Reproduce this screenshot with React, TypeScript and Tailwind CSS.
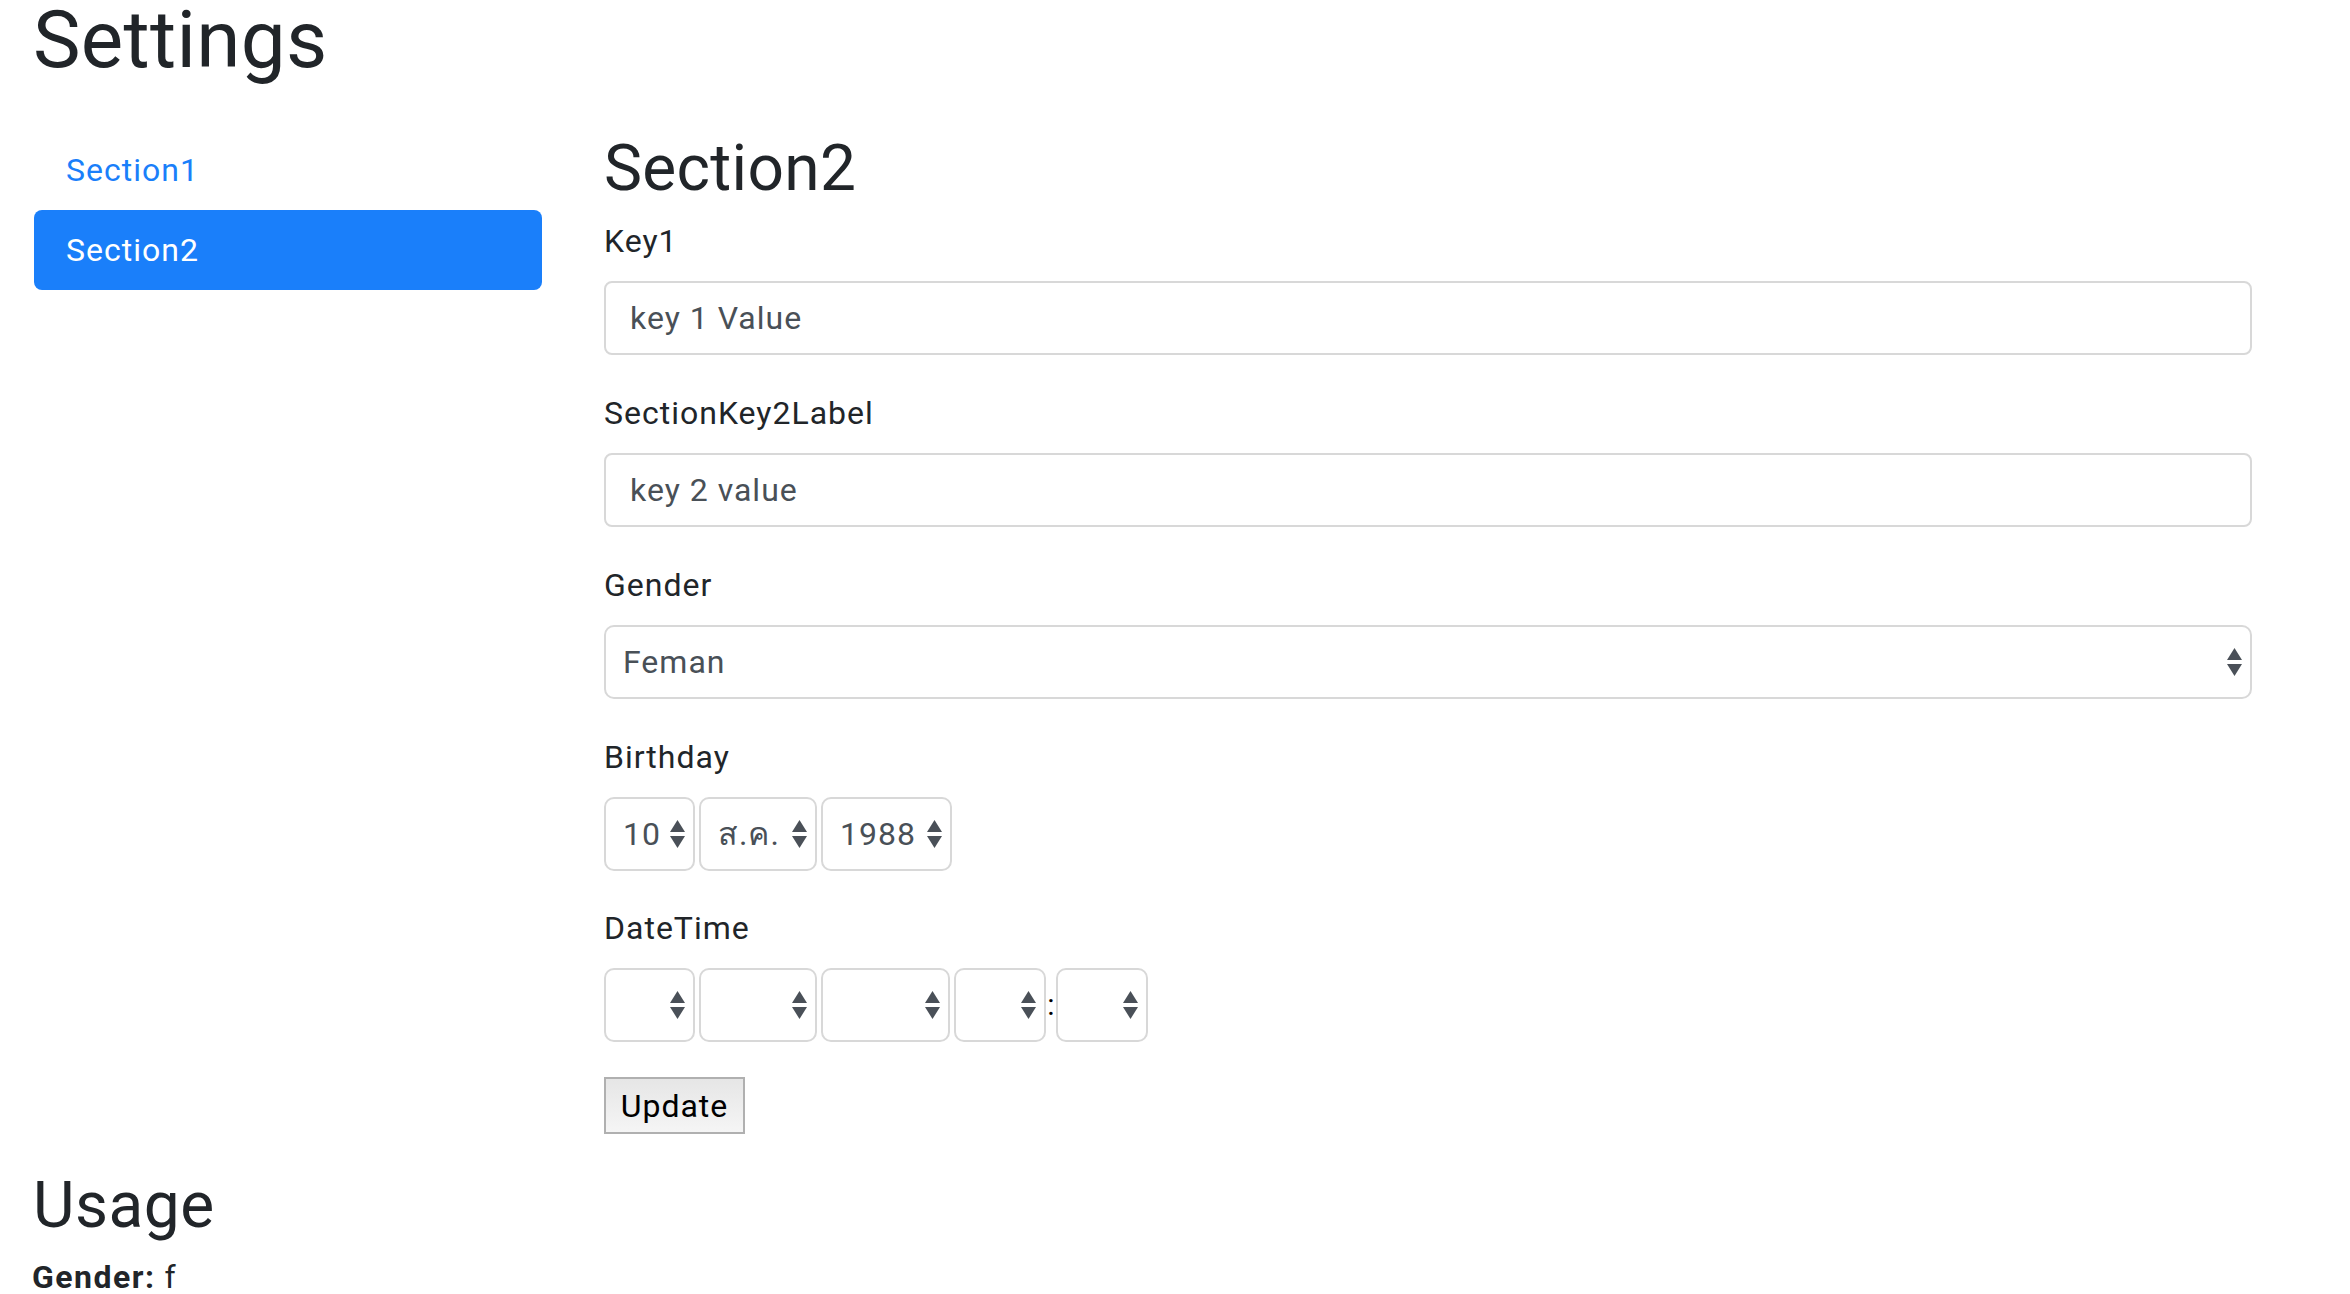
import React from 'react';

function Arrows() {
  return (
    <svg width="15" height="28" viewBox="0 0 15 28" className="shrink-0">
      <path d="M7.5 0 L15 12 L0 12 Z" fill="#4a5058" />
      <path d="M0 16 L15 16 L7.5 28 Z" fill="#4a5058" />
    </svg>
  );
}

function SmallSelect({ value, width }: { value?: string; width: string }) {
  return (
    <div className={`${width} h-[74px] shrink-0 flex items-center justify-between pl-[17px] pr-[8px] border-2 border-[#d8d8d8] rounded-[10px] bg-white text-[#495057]`}>
      <span>{value}</span>
      <Arrows />
    </div>
  );
}

export default function App() {
  return (
    <div className="min-h-screen bg-white px-[30px] overflow-hidden font-['Roboto',sans-serif] text-[#212529] text-[32px] leading-[48px] tracking-[1px]">
      <h1 className="pl-[3px] text-[80px] leading-[80px] font-normal tracking-[0.3px]">Settings</h1>

      <div className="mt-[50px] flex">
        {/* ═══ NAV ═══ */}
        <div className="w-[574px] shrink-0 pl-[4px]">
          <nav className="w-[508px] flex flex-col">
            <a className="px-[32px] py-[16px] text-[#1a7ffa]">Section1</a>
            <a className="px-[32px] py-[16px] rounded-[8px] bg-[#1a7ffa] text-white">Section2</a>
          </nav>
        </div>

        {/* ═══ FORM ═══ */}
        <div className="w-[1648px]">
          <h2 className="text-[64px] leading-[77px] mb-[10px] tracking-[0.3px]">Section2</h2>

          <label className="block mb-[16px]">Key1</label>
          <div className="h-[74px] mb-[34px] flex items-center px-[24px] border-2 border-[#d8d8d8] rounded-[8px] text-[#495057]">
            key 1 Value
          </div>

          <label className="block mb-[16px]">SectionKey2Label</label>
          <div className="h-[74px] mb-[34px] flex items-center px-[24px] border-2 border-[#d8d8d8] rounded-[8px] text-[#495057]">
            key 2 value
          </div>

          <label className="block mb-[16px]">Gender</label>
          <div className="h-[74px] mb-[34px] flex items-center justify-between pl-[17px] pr-[8px] border-2 border-[#d8d8d8] rounded-[10px] text-[#495057]">
            <span>Feman</span>
            <Arrows />
          </div>

          <label className="block mb-[16px]">Birthday</label>
          <div className="flex gap-[4px] mb-[33px]">
            <SmallSelect value="10" width="w-[91px]" />
            <SmallSelect value="ส.ค." width="w-[118px]" />
            <SmallSelect value="1988" width="w-[131px]" />
          </div>

          <label className="block mb-[16px]">DateTime</label>
          <div className="flex items-center mb-[35px]">
            <SmallSelect width="w-[91px]" />
            <div className="w-[4px]" />
            <SmallSelect width="w-[118px]" />
            <div className="w-[4px]" />
            <SmallSelect width="w-[129px]" />
            <div className="w-[4px]" />
            <SmallSelect width="w-[92px]" />
            <span className="w-[10px] text-center text-black text-[30px] leading-none tracking-normal">:</span>
            <SmallSelect width="w-[92px]" />
          </div>

          <button className="w-[141px] h-[57px] border-2 border-[#b0b0b0] bg-gradient-to-b from-[#e6e6e6] to-[#f5f5f5] text-black text-[32px] leading-none">
            Update
          </button>
        </div>
      </div>

      {/* ═══ USAGE ═══ */}
      <h2 className="mt-[33px] pl-[3px] text-[64px] leading-[77px] tracking-[0.5px]">Usage</h2>
      <p className="mt-[9px] pl-[2px]">
        <b className="font-bold tracking-[1.5px]">Gender:</b> f
      </p>
    </div>
  );
}
